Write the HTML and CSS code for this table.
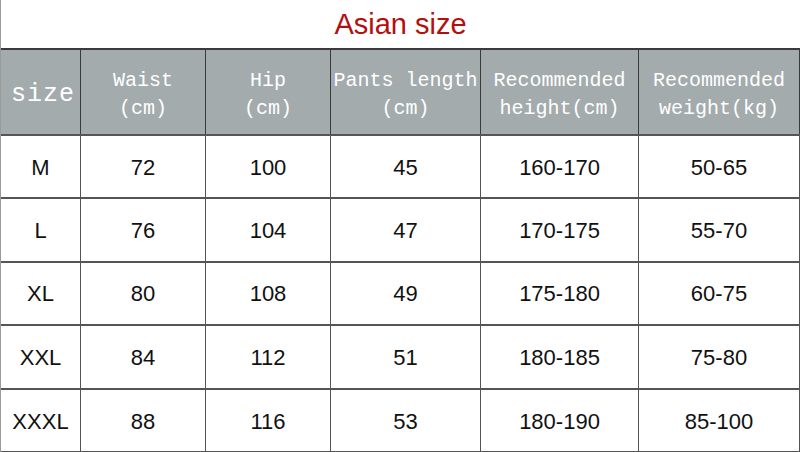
FILE: index.html
```html
<!DOCTYPE html>
<html>
<head>
<meta charset="utf-8">
<link rel="stylesheet" href="styles.css">
</head>
<body>
<div class="page">
  <div class="title">Asian size</div>
  <table class="chart">
    <colgroup>
      <col class="c1"><col class="c2"><col class="c3"><col class="c4"><col class="c5"><col class="c6">
    </colgroup>
    <thead>
      <tr>
        <th class="size-h">size</th>
        <th>Waist<br>(cm)</th>
        <th>Hip<br>(cm)</th>
        <th>Pants length<br>(cm)</th>
        <th>Recommended<br>height(cm)</th>
        <th>Recommended<br>weight(kg)</th>
      </tr>
    </thead>
    <tbody>
      <tr><td>M</td><td>72</td><td>100</td><td>45</td><td>160-170</td><td>50-65</td></tr>
      <tr><td>L</td><td>76</td><td>104</td><td>47</td><td>170-175</td><td>55-70</td></tr>
      <tr><td>XL</td><td>80</td><td>108</td><td>49</td><td>175-180</td><td>60-75</td></tr>
      <tr><td>XXL</td><td>84</td><td>112</td><td>51</td><td>180-185</td><td>75-80</td></tr>
      <tr><td>XXXL</td><td>88</td><td>116</td><td>53</td><td>180-190</td><td>85-100</td></tr>
    </tbody>
  </table>
</div>
</body>
</html>
```

FILE: styles.css
```css
html, body {
  margin: 0;
  padding: 0;
  background: #fff;
}
.page {
  width: 800px;
  height: 452px;
  overflow: hidden;
  border-left: 1px solid #9a9a9a;
  box-sizing: border-box;
}
.title {
  height: 48px;
  display: flex;
  align-items: center;
  justify-content: center;
  font-family: "Liberation Sans", Arial, sans-serif;
  font-size: 29px;
  color: #b40f0f;
}
.chart {
  border-collapse: collapse;
  table-layout: fixed;
  width: 799px;
  margin-left: -1px;
}
.c1 { width: 80px; }
.c2 { width: 125px; }
.c3 { width: 125px; }
.c4 { width: 150px; }
.c5 { width: 158px; }
.c6 { width: 161px; }
.chart th, .chart td {
  border: 1px solid #3a3a3a;
  border-width: 2px 1px 1px 1px;
  text-align: center;
  padding: 0;
}
.chart th {
  background: #a3abad;
  color: #fff;
  font-family: "Liberation Mono", "DejaVu Sans Mono", monospace;
  font-weight: normal;
  font-size: 20px;
  line-height: 28px;
  height: 86px;
  padding-top: 5px;
  box-sizing: border-box;
}
.chart th.size-h {
  font-size: 25px;
  text-align: left;
  padding-left: 10px;
  letter-spacing: 1px;
}
.chart td {
  font-family: "Liberation Sans", Arial, sans-serif;
  font-size: 22px;
  color: #111;
  height: 63.4px;
  padding-top: 2px;
  box-sizing: border-box;
  border-color: #555;
}
.chart tbody tr td:first-child {
  border-left-color: #9a9a9a;
}
```
